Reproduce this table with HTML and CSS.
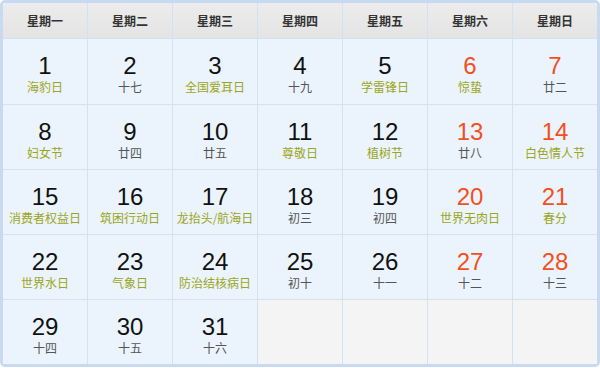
FILE: index.html
```html
<!DOCTYPE html>
<html lang="zh-CN">
<head>
<meta charset="utf-8">
<link rel="stylesheet" href="styles.css">
</head>
<body>
<div class="calendar">
  <div class="head">星期一</div>
  <div class="head">星期二</div>
  <div class="head">星期三</div>
  <div class="head">星期四</div>
  <div class="head">星期五</div>
  <div class="head">星期六</div>
  <div class="head">星期日</div>

  <div class="day"><span class="num">1</span><span class="sub fest">海豹日</span></div>
  <div class="day"><span class="num">2</span><span class="sub">十七</span></div>
  <div class="day"><span class="num">3</span><span class="sub fest">全国爱耳日</span></div>
  <div class="day"><span class="num">4</span><span class="sub">十九</span></div>
  <div class="day"><span class="num">5</span><span class="sub fest">学雷锋日</span></div>
  <div class="day"><span class="num red">6</span><span class="sub fest">惊蛰</span></div>
  <div class="day"><span class="num red">7</span><span class="sub">廿二</span></div>

  <div class="day"><span class="num">8</span><span class="sub fest">妇女节</span></div>
  <div class="day"><span class="num">9</span><span class="sub">廿四</span></div>
  <div class="day"><span class="num">10</span><span class="sub">廿五</span></div>
  <div class="day"><span class="num">11</span><span class="sub fest">尊敬日</span></div>
  <div class="day"><span class="num">12</span><span class="sub fest">植树节</span></div>
  <div class="day"><span class="num red">13</span><span class="sub">廿八</span></div>
  <div class="day"><span class="num red">14</span><span class="sub fest">白色情人节</span></div>

  <div class="day"><span class="num">15</span><span class="sub fest">消费者权益日</span></div>
  <div class="day"><span class="num">16</span><span class="sub fest">筑困行动日</span></div>
  <div class="day"><span class="num">17</span><span class="sub fest">龙抬头/航海日</span></div>
  <div class="day"><span class="num">18</span><span class="sub">初三</span></div>
  <div class="day"><span class="num">19</span><span class="sub">初四</span></div>
  <div class="day"><span class="num red">20</span><span class="sub fest">世界无肉日</span></div>
  <div class="day"><span class="num red">21</span><span class="sub fest">春分</span></div>

  <div class="day"><span class="num">22</span><span class="sub fest">世界水日</span></div>
  <div class="day"><span class="num">23</span><span class="sub fest">气象日</span></div>
  <div class="day"><span class="num">24</span><span class="sub fest">防治结核病日</span></div>
  <div class="day"><span class="num">25</span><span class="sub">初十</span></div>
  <div class="day"><span class="num">26</span><span class="sub">十一</span></div>
  <div class="day"><span class="num red">27</span><span class="sub">十二</span></div>
  <div class="day"><span class="num red">28</span><span class="sub">十三</span></div>

  <div class="day"><span class="num">29</span><span class="sub">十四</span></div>
  <div class="day"><span class="num">30</span><span class="sub">十五</span></div>
  <div class="day"><span class="num">31</span><span class="sub">十六</span></div>
  <div class="day empty"></div>
  <div class="day empty"></div>
  <div class="day empty"></div>
  <div class="day empty"></div>
</div>
</body>
</html>
```
FILE: styles.css
```css
html, body {
  margin: 0;
  padding: 0;
  background: #ffffff;
}

.calendar {
  width: 600px;
  box-sizing: border-box;
  border: 3px solid #c8daf1;
  border-radius: 5px;
  display: grid;
  grid-template-columns: repeat(7, 1fr);
  grid-template-rows: 35px 65px repeat(4, 64px);
  gap: 1px;
  background: #d4e1f1;
  font-family: "Liberation Sans", "Noto Sans CJK SC", sans-serif;
}

.head {
  background: linear-gradient(#ececec, #e4e4e4);
  color: #333333;
  font-family: "Noto Sans CJK SC", sans-serif;
  font-size: 12px;
  font-weight: 700;
  display: flex;
  align-items: center;
  justify-content: center;
}

.day {
  background: #ebf4fc;
  display: flex;
  flex-direction: column;
  align-items: center;
  padding-top: 13px;
  box-sizing: border-box;
}

.day.empty {
  background: #f4f4f4;
}

.num {
  font-family: "Liberation Sans", sans-serif;
  font-size: 24px;
  line-height: 28px;
  color: #111111;
}

.num.red {
  color: #f2501e;
}

.sub {
  font-family: "Noto Sans CJK SC", sans-serif;
  font-size: 12px;
  line-height: 14px;
  color: #555555;
}

.sub.fest {
  color: #9ca521;
}
```
